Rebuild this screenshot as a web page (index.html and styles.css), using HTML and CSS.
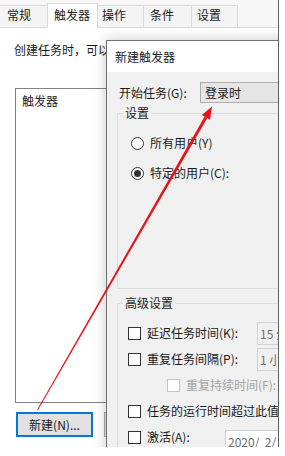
FILE: index.html
```html
<!DOCTYPE html>
<html lang="zh-CN">
<head>
<meta charset="utf-8">
<title>新建触发器</title>
<link rel="stylesheet" href="styles.css">
</head>
<body>
<div class="window">
  <div class="tabs">
    <div class="tab t1">常规</div>
    <div class="tab t2 active">触发器</div>
    <div class="tab t3">操作</div>
    <div class="tab t4">条件</div>
    <div class="tab t5">设置</div>
  </div>
  <div class="page">
    <p class="intro">创建任务时，可以指定触发该任务的条件。</p>
    <div class="listbox"><div class="list-head">触发器</div></div>
    <div class="buttons">
      <button class="btn primary">新建(N)...</button>
      <button class="btn">编辑(E)...</button>
    </div>
  </div>
  <div class="dialog">
    <div class="titlebar">新建触发器</div>
    <div class="dbody">
      <div class="row-start">
        <span class="lbl">开始任务(G):</span>
        <div class="combo">登录时</div>
      </div>
      <fieldset class="group g1">
        <legend>设置</legend>
        <div class="radio-row first"><span class="radio"></span>所有用户(Y)</div>
        <div class="radio-row"><span class="radio checked"></span>特定的用户(C):</div>
      </fieldset>
      <fieldset class="group g2">
        <legend>高级设置</legend>
        <div class="crow first"><span class="cb"></span><span class="clbl w110">延迟任务时间(K):</span><span class="field">15 分钟</span></div>
        <div class="crow"><span class="cb"></span><span class="clbl w110">重复任务间隔(P):</span><span class="field">1 小时</span></div>
        <div class="crow disabled"><span class="cb"></span><span class="clbl">重复持续时间(F):</span></div>
        <div class="crow"><span class="cb"></span><span class="clbl">任务的运行时间超过此值则停止执行(L):</span></div>
        <div class="crow"><span class="cb"></span><span class="clbl w78">激活(A):</span><span class="field date">2020/&nbsp; 2/&nbsp; 5</span></div>
      </fieldset>
    </div>
  </div>
</div>
<svg class="arrow" width="285" height="456" viewBox="0 0 285 456">
  <polygon fill="#e8101a" points="37.9,410.3 37.1,409.7 204.7,116.6 207.3,118.1"/>
  <polygon fill="#e8101a" points="212,106.5 210,119.8 201.9,115.1"/>
</svg>
</body>
</html>
```
FILE: styles.css
```css
* { box-sizing: border-box; }
html, body { margin: 0; padding: 0; }
body {
  width: 285px;
  height: 456px;
  background: #fff;
  position: relative;
  overflow: hidden;
  font-family: "Noto Sans CJK SC", "Microsoft YaHei", sans-serif;
  font-size: 12px;
  line-height: 16px;
  color: #1a1a1a;
}
.window {
  position: relative;
  width: 279px;
  height: 447px;
  border-right: 1px solid #5e5e5e;
  overflow: hidden;
  background: #fff;
}
.tabs {
  display: flex;
  align-items: flex-end;
  height: 28px;
  background: #f7f7f7;
  border-bottom: 1px solid #d9d9d9;
}
.tab {
  height: 22px;
  border: 1px solid #d9d9d9;
  border-bottom: none;
  margin-left: -1px;
  padding-top: 1px;
  background: #f4f4f4;
  white-space: nowrap;
}
.tab.active {
  height: 25px;
  margin-bottom: -1px;
  padding-top: 3px;
  background: #fff;
  position: relative;
  z-index: 1;
}
.t1 { width: 49px; padding-left: 7px; }
.t2 { width: 51px; padding-left: 6px; }
.t3 { width: 47px; padding-left: 4px; }
.t4 { width: 49px; padding-left: 6px; }
.t5 { width: 47px; padding-left: 5px; }

.page {
  padding: 14px 0 0 14px;
  height: 419px;
  background: #fff;
}
.intro { margin: 0; white-space: nowrap; }
.listbox {
  margin: 30px 0 0 1px;
  width: 250px;
  height: 315px;
  border: 1px solid #828282;
  background: #fff;
}
.list-head { padding: 4px 0 0 6px; }
.buttons {
  display: flex;
  gap: 11px;
  margin: 9px 0 0 2px;
}
.btn {
  width: 77px;
  height: 25px;
  padding: 0;
  font: inherit;
  color: #1a1a1a;
  background: #e1e1e1;
  border: 1px solid #adadad;
}
.btn.primary { border: 2px solid #0078d7; }

.dialog {
  position: absolute;
  left: 106px;
  top: 40px;
  width: 400px;
  height: 520px;
  background: #f0f0f0;
  border: 1px solid #707070;
  box-shadow: 0 0 13px rgba(0, 0, 0, 0.22);
  z-index: 2;
}
.titlebar {
  height: 31px;
  line-height: 31px;
  padding-left: 8px;
  background: #fff;
}
.dbody { padding: 10px 0 0 10px; }
.row-start {
  display: flex;
  align-items: center;
  height: 21px;
  margin-left: 2px;
}
.lbl { width: 81px; white-space: nowrap; }
.combo {
  width: 140px;
  height: 21px;
  line-height: 19px;
  padding-left: 4px;
  background: #e5e5e5;
  border: 1px solid #adadad;
}
.group {
  margin: 0;
  padding: 0;
  width: 320px;
  border: 1px solid #dcdcdc;
  min-width: 0;
}
.group legend {
  margin-left: 5px;
  padding: 0 2px;
  line-height: 16px;
}
.g1 { margin-top: 2px; padding-bottom: 105px; }
.g2 { margin-top: 6px; padding-bottom: 40px; }

.radio-row {
  display: flex;
  align-items: center;
  height: 20px;
  margin-top: 10px;
  padding-left: 13px;
  white-space: nowrap;
}
.radio-row.first { margin-top: 12px; }
.radio {
  width: 13px;
  height: 13px;
  border: 1px solid #333;
  border-radius: 50%;
  background: #fff;
  margin-right: 6px;
  display: flex;
  align-items: center;
  justify-content: center;
}
.radio.checked::after {
  content: "";
  width: 7px;
  height: 7px;
  border-radius: 50%;
  background: #333;
}

.crow {
  display: flex;
  align-items: center;
  height: 26px;
  padding-left: 10px;
  white-space: nowrap;
}
.crow.first { margin-top: 9px; }
.cb {
  flex: none;
  width: 13px;
  height: 13px;
  border: 1px solid #333;
  background: #fff;
  margin-right: 6px;
}
.clbl { flex: none; }
.w110 { width: 110px; }
.w78 { width: 78px; }
.crow.disabled { padding-left: 49px; color: #a3a3a3; }
.crow.disabled .cb { border-color: #c4c4c4; }
.field {
  flex: none;
  width: 90px;
  height: 23px;
  line-height: 21px;
  padding-left: 2px;
  border: 1px solid #d3d3d3;
  background: #f0f0f0;
  color: #6d6d6d;
}
.field.date {
  align-self: flex-start;
  margin-top: 6px;
  width: 120px;
  background: #fff;
  border-color: #cfcfcf;
}

.arrow {
  position: absolute;
  left: 0;
  top: 0;
  pointer-events: none;
  z-index: 5;
}
```
